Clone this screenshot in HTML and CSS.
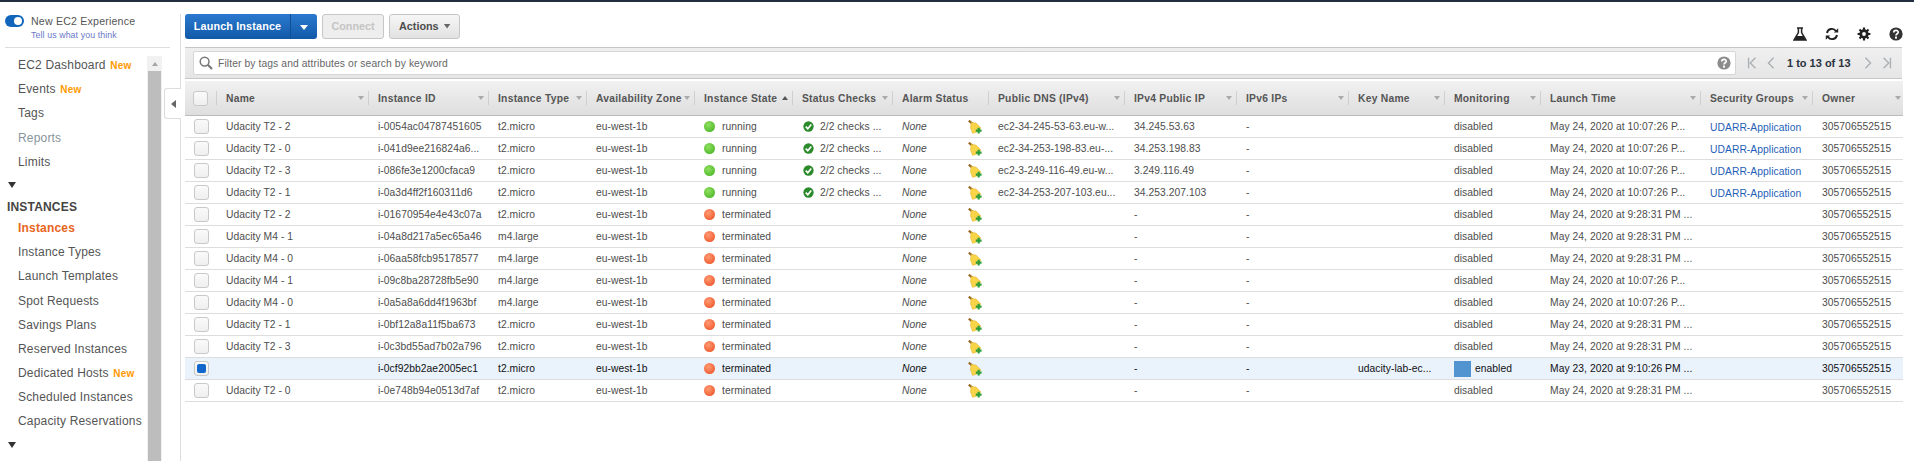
FILE: index.html
```html
<!DOCTYPE html>
<html>
<head>
	<meta charset="utf-8">
	<title>EC2 Instances</title>
	<link rel="stylesheet" href="styles.css">
</head>
<body>
<svg class="sprite" width="0" height="0">
	<defs>
		<symbol id="broom" viewBox="0 0 14 14">
			<path d="M0.8 0.6 L4.6 3.8" stroke="#9a6a24" stroke-width="2.2"/>
			<path d="M3.2 2.4 L8 3 L13 8 L9 12 L4.6 13.4 L2.4 7.6 Z" fill="#f8d448" stroke="#e0ae28" stroke-width=".5"/>
			<path d="M7.8 10.6 H13.6 M10.7 7.8 V13.6" stroke="#2f9e3a" stroke-width="2.2"/>
		</symbol>
		<symbol id="check" viewBox="0 0 12 12">
			<circle cx="6" cy="6" r="5.6" fill="#2b8a2b"/>
			<path d="M3 6.2 L5.2 8.4 L9 3.8" fill="none" stroke="#fff" stroke-width="1.8"/>
		</symbol>
		<symbol id="help" viewBox="0 0 14 14">
			<circle cx="7" cy="7" r="6.6"/>
			<path d="M4.8 5.4 C4.8 2.8 9.2 2.8 9.2 5.2 C9.2 6.8 7 6.8 7 8.6" fill="none" stroke="#fff" stroke-width="1.7"/>
			<rect x="6" y="9.6" width="2" height="2" fill="#fff"/>
		</symbol>
	</defs>
</svg>

<div class="page">
	<aside class="side">
		<div class="exp">
			<span class="toggle"></span>
			<div>
				<div class="exp-title">New EC2 Experience</div>
				<div class="exp-link">Tell us what you think</div>
			</div>
		</div>
		<div class="side-body">
			<nav class="nav">
				<a class="nav-item">EC2 Dashboard <b class="new">New</b></a>
				<a class="nav-item">Events <b class="new">New</b></a>
				<a class="nav-item">Tags</a>
				<a class="nav-item muted">Reports</a>
				<a class="nav-item">Limits</a>
				<div class="nav-arrow"></div>
				<div class="nav-head">INSTANCES</div>
				<a class="nav-item active">Instances</a>
				<a class="nav-item">Instance Types</a>
				<a class="nav-item">Launch Templates</a>
				<a class="nav-item">Spot Requests</a>
				<a class="nav-item">Savings Plans</a>
				<a class="nav-item">Reserved Instances</a>
				<a class="nav-item">Dedicated Hosts <b class="new">New</b></a>
				<a class="nav-item">Scheduled Instances</a>
				<a class="nav-item">Capacity Reservations</a>
				<div class="nav-arrow"></div>
				<div class="nav-head">IMAGES</div>
			</nav>
			<div class="scroll">
				<div class="scroll-up"></div>
				<div class="scroll-thumb"></div>
			</div>
		</div>
		<div class="collapse"><span></span></div>
	</aside>

	<main class="main">
		<div class="toolbar">
			<div class="buttons">
				<div class="btn-launch"><span class="launch-label">Launch Instance</span><span class="launch-drop"></span></div>
				<div class="btn off">Connect</div>
				<div class="btn">Actions <span class="chev"></span></div>
			</div>
			<div class="tools">
				<svg class="tool" viewBox="0 0 14 14"><path d="M4 1 H10 M5.4 1 V5.6 L1 13 H13 L8.6 5.6 V1" fill="none" stroke="#222" stroke-width="1.5"/><path d="M3.6 9 H10.4 L12.6 13 H1.4 Z" fill="#222"/></svg>
				<svg class="tool" viewBox="0 0 14 14"><path d="M2 6 A5 5 0 0 1 11 4 M12 8 A5 5 0 0 1 3 10" fill="none" stroke="#222" stroke-width="1.9"/><path d="M8.8 5.4 H13.2 V1.2 Z M5.2 8.6 H0.8 V12.8 Z" fill="#222"/></svg>
				<svg class="tool" viewBox="0 0 14 14"><circle cx="7" cy="7" r="3.4" fill="none" stroke="#222" stroke-width="2.6"/><path d="M7 .6 V13.4 M.6 7 H13.4 M2.5 2.5 L11.5 11.5 M11.5 2.5 L2.5 11.5" stroke="#222" stroke-width="2.2"/><circle cx="7" cy="7" r="1.9" fill="#fff"/></svg>
				<svg class="tool dark"><use href="#help"/></svg>
			</div>
		</div>

		<div class="filter">
			<div class="search">
				<svg class="lens" viewBox="0 0 14 14"><circle cx="5.6" cy="5.6" r="4.4" fill="none" stroke="#777" stroke-width="1.5"/><path d="M8.8 8.8 L13 13" stroke="#777" stroke-width="2.2"/></svg>
				<span class="placeholder">Filter by tags and attributes or search by keyword</span>
				<svg class="search-help"><use href="#help"/></svg>
			</div>
			<div class="pager">
				<svg class="pg" viewBox="0 0 10 14"><path d="M1 1 V13 M9 1 L3 7 L9 13" fill="none"/></svg>
				<svg class="pg" viewBox="0 0 10 14"><path d="M8 1 L2 7 L8 13" fill="none"/></svg>
				<span class="pg-text">1 to 13 of 13</span>
				<svg class="pg" viewBox="0 0 10 14"><path d="M2 1 L8 7 L2 13" fill="none"/></svg>
				<svg class="pg" viewBox="0 0 10 14"><path d="M9 1 V13 M1 1 L7 7 L1 13" fill="none"/></svg>
			</div>
		</div>

		<table class="grid">
			<colgroup>
				<col class="w32"><col class="w152"><col class="w120"><col class="w98"><col class="w108"><col class="w98"><col class="w100"><col class="w96"><col class="w136"><col class="w112"><col class="w112"><col class="w96"><col class="w96"><col class="w160"><col class="w112"><col class="w90">
			</colgroup>
			<thead>
				<tr>
					<th><div class="th first"><span class="box"></span></div></th>
					<th><div class="th">Name<i class="caret"></i></div></th>
					<th><div class="th">Instance ID<i class="caret"></i></div></th>
					<th><div class="th">Instance Type<i class="caret"></i></div></th>
					<th><div class="th">Availability Zone<i class="caret"></i></div></th>
					<th><div class="th">Instance State<i class="caret up"></i></div></th>
					<th><div class="th">Status Checks<i class="caret"></i></div></th>
					<th><div class="th">Alarm Status</div></th>
					<th><div class="th">Public DNS (IPv4)<i class="caret"></i></div></th>
					<th><div class="th">IPv4 Public IP<i class="caret"></i></div></th>
					<th><div class="th">IPv6 IPs<i class="caret"></i></div></th>
					<th><div class="th">Key Name<i class="caret"></i></div></th>
					<th><div class="th">Monitoring<i class="caret"></i></div></th>
					<th><div class="th">Launch Time<i class="caret"></i></div></th>
					<th><div class="th">Security Groups<i class="caret"></i></div></th>
					<th><div class="th last">Owner<i class="caret"></i></div></th>
				</tr>
			</thead>
			<tbody>
				<tr>
					<td class="cb"><span class="box"></span></td><td>Udacity T2 - 2</td><td>i-0054ac04787451605</td><td>t2.micro</td><td>eu-west-1b</td>
					<td><i class="dot green"></i>running</td><td><svg class="ok"><use href="#check"/></svg>2/2 checks ...</td>
					<td><div class="alarm"><em>None</em><svg class="broom"><use href="#broom"/></svg></div></td>
					<td>ec2-34-245-53-63.eu-w...</td><td>34.245.53.63</td><td>-</td><td></td><td>disabled</td><td>May 24, 2020 at 10:07:26 P...</td><td><a class="link">UDARR-Application</a></td><td>305706552515</td>
				</tr>
				<tr>
					<td class="cb"><span class="box"></span></td><td>Udacity T2 - 0</td><td>i-041d9ee216824a6...</td><td>t2.micro</td><td>eu-west-1b</td>
					<td><i class="dot green"></i>running</td><td><svg class="ok"><use href="#check"/></svg>2/2 checks ...</td>
					<td><div class="alarm"><em>None</em><svg class="broom"><use href="#broom"/></svg></div></td>
					<td>ec2-34-253-198-83.eu-...</td><td>34.253.198.83</td><td>-</td><td></td><td>disabled</td><td>May 24, 2020 at 10:07:26 P...</td><td><a class="link">UDARR-Application</a></td><td>305706552515</td>
				</tr>
				<tr>
					<td class="cb"><span class="box"></span></td><td>Udacity T2 - 3</td><td>i-086fe3e1200cfaca9</td><td>t2.micro</td><td>eu-west-1b</td>
					<td><i class="dot green"></i>running</td><td><svg class="ok"><use href="#check"/></svg>2/2 checks ...</td>
					<td><div class="alarm"><em>None</em><svg class="broom"><use href="#broom"/></svg></div></td>
					<td>ec2-3-249-116-49.eu-w...</td><td>3.249.116.49</td><td>-</td><td></td><td>disabled</td><td>May 24, 2020 at 10:07:26 P...</td><td><a class="link">UDARR-Application</a></td><td>305706552515</td>
				</tr>
				<tr>
					<td class="cb"><span class="box"></span></td><td>Udacity T2 - 1</td><td>i-0a3d4ff2f160311d6</td><td>t2.micro</td><td>eu-west-1b</td>
					<td><i class="dot green"></i>running</td><td><svg class="ok"><use href="#check"/></svg>2/2 checks ...</td>
					<td><div class="alarm"><em>None</em><svg class="broom"><use href="#broom"/></svg></div></td>
					<td>ec2-34-253-207-103.eu...</td><td>34.253.207.103</td><td>-</td><td></td><td>disabled</td><td>May 24, 2020 at 10:07:26 P...</td><td><a class="link">UDARR-Application</a></td><td>305706552515</td>
				</tr>
				<tr>
					<td class="cb"><span class="box"></span></td><td>Udacity T2 - 2</td><td>i-01670954e4e43c07a</td><td>t2.micro</td><td>eu-west-1b</td>
					<td><i class="dot red"></i>terminated</td><td></td>
					<td><div class="alarm"><em>None</em><svg class="broom"><use href="#broom"/></svg></div></td>
					<td></td><td>-</td><td>-</td><td></td><td>disabled</td><td>May 24, 2020 at 9:28:31 PM ...</td><td></td><td>305706552515</td>
				</tr>
				<tr>
					<td class="cb"><span class="box"></span></td><td>Udacity M4 - 1</td><td>i-04a8d217a5ec65a46</td><td>m4.large</td><td>eu-west-1b</td>
					<td><i class="dot red"></i>terminated</td><td></td>
					<td><div class="alarm"><em>None</em><svg class="broom"><use href="#broom"/></svg></div></td>
					<td></td><td>-</td><td>-</td><td></td><td>disabled</td><td>May 24, 2020 at 9:28:31 PM ...</td><td></td><td>305706552515</td>
				</tr>
				<tr>
					<td class="cb"><span class="box"></span></td><td>Udacity M4 - 0</td><td>i-06aa58fcb95178577</td><td>m4.large</td><td>eu-west-1b</td>
					<td><i class="dot red"></i>terminated</td><td></td>
					<td><div class="alarm"><em>None</em><svg class="broom"><use href="#broom"/></svg></div></td>
					<td></td><td>-</td><td>-</td><td></td><td>disabled</td><td>May 24, 2020 at 9:28:31 PM ...</td><td></td><td>305706552515</td>
				</tr>
				<tr>
					<td class="cb"><span class="box"></span></td><td>Udacity M4 - 1</td><td>i-09c8ba28728fb5e90</td><td>m4.large</td><td>eu-west-1b</td>
					<td><i class="dot red"></i>terminated</td><td></td>
					<td><div class="alarm"><em>None</em><svg class="broom"><use href="#broom"/></svg></div></td>
					<td></td><td>-</td><td>-</td><td></td><td>disabled</td><td>May 24, 2020 at 10:07:26 P...</td><td></td><td>305706552515</td>
				</tr>
				<tr>
					<td class="cb"><span class="box"></span></td><td>Udacity M4 - 0</td><td>i-0a5a8a6dd4f1963bf</td><td>m4.large</td><td>eu-west-1b</td>
					<td><i class="dot red"></i>terminated</td><td></td>
					<td><div class="alarm"><em>None</em><svg class="broom"><use href="#broom"/></svg></div></td>
					<td></td><td>-</td><td>-</td><td></td><td>disabled</td><td>May 24, 2020 at 10:07:26 P...</td><td></td><td>305706552515</td>
				</tr>
				<tr>
					<td class="cb"><span class="box"></span></td><td>Udacity T2 - 1</td><td>i-0bf12a8a11f5ba673</td><td>t2.micro</td><td>eu-west-1b</td>
					<td><i class="dot red"></i>terminated</td><td></td>
					<td><div class="alarm"><em>None</em><svg class="broom"><use href="#broom"/></svg></div></td>
					<td></td><td>-</td><td>-</td><td></td><td>disabled</td><td>May 24, 2020 at 9:28:31 PM ...</td><td></td><td>305706552515</td>
				</tr>
				<tr>
					<td class="cb"><span class="box"></span></td><td>Udacity T2 - 3</td><td>i-0c3bd55ad7b02a796</td><td>t2.micro</td><td>eu-west-1b</td>
					<td><i class="dot red"></i>terminated</td><td></td>
					<td><div class="alarm"><em>None</em><svg class="broom"><use href="#broom"/></svg></div></td>
					<td></td><td>-</td><td>-</td><td></td><td>disabled</td><td>May 24, 2020 at 9:28:31 PM ...</td><td></td><td>305706552515</td>
				</tr>
				<tr class="selected">
					<td class="cb"><span class="box on"></span></td><td></td><td>i-0cf92bb2ae2005ec1</td><td>t2.micro</td><td>eu-west-1b</td>
					<td><i class="dot red"></i>terminated</td><td></td>
					<td><div class="alarm"><em>None</em><svg class="broom"><use href="#broom"/></svg></div></td>
					<td></td><td>-</td><td>-</td><td>udacity-lab-ec...</td><td><i class="mon"></i>enabled</td><td>May 23, 2020 at 9:10:26 PM ...</td><td></td><td>305706552515</td>
				</tr>
				<tr>
					<td class="cb"><span class="box"></span></td><td>Udacity T2 - 0</td><td>i-0e748b94e0513d7af</td><td>t2.micro</td><td>eu-west-1b</td>
					<td><i class="dot red"></i>terminated</td><td></td>
					<td><div class="alarm"><em>None</em><svg class="broom"><use href="#broom"/></svg></div></td>
					<td></td><td>-</td><td>-</td><td></td><td>disabled</td><td>May 24, 2020 at 9:28:31 PM ...</td><td></td><td>305706552515</td>
				</tr>
			</tbody>
		</table>
	</main>
</div>
</body>
</html>
```

FILE: styles.css
```css
html, body {
	margin: 0;
	height: 461px;
	overflow: hidden;
	background: #fff;
}
body {
	font-family: "Liberation Sans", Arial, sans-serif;
	font-size: 10.3px;
	color: #4d4d4d;
	border-top: 2px solid #232f3e;
	box-sizing: border-box;
}
.sprite {
	display: block;
	height: 0;
}
.page {
	display: flex;
	height: 459px;
}

/* left nav */
.side {
	position: relative;
	box-sizing: border-box;
	width: 181px;
	flex: none;
	margin-top: 12px;
	border-right: 1px solid #ddd;
	display: flex;
	flex-direction: column;
}
.exp {
	display: flex;
	gap: 7px;
	height: 32px;
	margin: 0 10px 0 5px;
	padding-top: 1px;
	border-bottom: 1px solid #ddd;
}
.toggle {
	position: relative;
	width: 19px;
	height: 12px;
	border-radius: 6px;
	background: #1166bb;
	flex: none;
}
.toggle:after {
	content: "";
	position: absolute;
	right: 2px;
	top: 2px;
	width: 8px;
	height: 8px;
	border-radius: 50%;
	background: #fff;
}
.exp-title {
	font-size: 10.6px;
	line-height: 13px;
	letter-spacing: .2px;
	color: #555;
}
.exp-link {
	font-size: 8.8px;
	line-height: 13px;
	margin-top: 1px;
	letter-spacing: .1px;
	color: #6a78c8;
}
.side-body {
	display: flex;
	flex: 1;
	min-height: 0;
	overflow: hidden;
}
.nav {
	width: 147px;
	flex: none;
	padding-top: 5px;
	font-size: 12px;
	letter-spacing: .18px;
	color: #555;
}
.nav-item {
	display: block;
	height: 24.2px;
	line-height: 24px;
	padding-left: 18px;
	white-space: nowrap;
}
.nav-item.muted {
	color: #87949b;
}
.nav-item.active {
	color: #e8651c;
	font-weight: bold;
}
.new {
	color: #f90;
	font-size: 10px;
	margin-left: 1px;
}
.nav-arrow {
	width: 0;
	height: 0;
	margin: 8px 0 9px 8px;
	border-left: 4px solid transparent;
	border-right: 4px solid transparent;
	border-top: 6px solid #333;
}
.nav-head {
	height: 19px;
	line-height: 20px;
	padding-left: 7px;
	font-weight: bold;
	color: #444;
}
.scroll {
	width: 15px;
	flex: none;
	margin-top: 8px;
	background: #f1f1f1;
	padding: 0 1px;
	box-sizing: border-box;
}
.scroll-up {
	width: 0;
	height: 0;
	margin: 6px auto 5px;
	border-left: 3.5px solid transparent;
	border-right: 3.5px solid transparent;
	border-bottom: 4px solid #a4a4a4;
}
.scroll-thumb {
	height: 400px;
	background: #bdbdbd;
}
.collapse {
	position: absolute;
	left: 164px;
	top: 74px;
	width: 17px;
	height: 31px;
	box-sizing: border-box;
	background: #fff;
	border: 1px solid #ddd;
	border-right: 0;
	border-radius: 3px 0 0 3px;
	display: flex;
	align-items: center;
	justify-content: center;
}
.collapse span {
	border-top: 4px solid transparent;
	border-bottom: 4px solid transparent;
	border-right: 5px solid #666;
}

/* main */
.main {
	flex: none;
	width: 1722px;
	padding: 12px 0 0 4px;
	box-sizing: border-box;
}
.toolbar {
	display: flex;
	justify-content: space-between;
	height: 25px;
	margin-bottom: 8px;
}
.buttons {
	display: flex;
	gap: 5px;
}
.btn-launch {
	display: flex;
	height: 25px;
	width: 132px;
	border-radius: 3px;
	background: linear-gradient(#2a79cf, #1259a8);
	color: #fff;
	font-weight: bold;
	font-size: 10.8px;
	letter-spacing: .15px;
	line-height: 25px;
	box-sizing: border-box;
}
.launch-label {
	width: 105px;
	text-align: center;
	border-right: 1px solid #0f4f96;
}
.launch-drop {
	width: 0;
	height: 0;
	margin: 11px 0 0 9px;
	border-left: 4px solid transparent;
	border-right: 4px solid transparent;
	border-top: 5px solid #fff;
}
.btn {
	height: 25px;
	box-sizing: border-box;
	padding: 0 8px 0 9px;
	border: 1px solid #c6c6c6;
	border-radius: 3px;
	background: linear-gradient(#f6f6f6, #e2e2e2);
	font-weight: bold;
	font-size: 10.8px;
	line-height: 23px;
	color: #4d4d4d;
	display: flex;
	align-items: center;
	gap: 5px;
}
.btn.off {
	color: #c4c4c4;
	padding: 0 8px;
	width: 62px;
	background: #eee;
	justify-content: center;
}
.chev {
	width: 7px;
	height: 5px;
	margin-top: -1px;
	background: #666;
	clip-path: polygon(0 0, 100% 0, 50% 100%);
}
.tools {
	display: flex;
	gap: 18px;
	padding-top: 13px;
}
.tool {
	width: 14px;
	height: 14px;
}
.tool.dark {
	fill: #333;
}

.filter {
	width: 1717px;
	height: 32px;
	box-sizing: border-box;
	padding: 3px 0 3px 8px;
	background: linear-gradient(#efefef, #e6e6e6);
	border-top: 1px solid #c6c6c6;
	border-bottom: 1px solid #c6c6c6;
	display: flex;
}
.search {
	width: 1543px;
	height: 24px;
	box-sizing: border-box;
	background: #fff;
	border: 1px solid #d6d6d6;
	border-radius: 2px;
	display: flex;
	align-items: center;
	padding: 0 4px 0 5px;
}
.lens {
	width: 14px;
	height: 14px;
	margin-right: 5px;
}
.placeholder {
	flex: 1;
	color: #666;
	letter-spacing: .1px;
}
.search-help {
	width: 14px;
	height: 14px;
	fill: #8c8c8c;
}
.pager {
	flex: 1;
	display: flex;
	align-items: center;
	padding-left: 11px;
}
.pg {
	width: 10px;
	height: 12px;
	flex: none;
	stroke: #aab0b4;
	stroke-width: 1.6;
	margin-right: 9px;
}
.pg-text {
	font-weight: bold;
	font-size: 11px;
	color: #2a3340;
	width: 64px;
	flex: none;
	white-space: nowrap;
	margin-left: 2px;
	margin-right: 12px;
}

/* table */
.grid {
	margin-top: 2px;
	width: 1718px;
	table-layout: fixed;
	border-collapse: collapse;
}
.w32 { width: 32px; }
.w90 { width: 90px; }
.w96 { width: 96px; }
.w98 { width: 98px; }
.w100 { width: 100px; }
.w108 { width: 108px; }
.w112 { width: 112px; }
.w120 { width: 120px; }
.w136 { width: 136px; }
.w152 { width: 152px; }
.w160 { width: 160px; }
.grid th {
	height: 34px;
	padding: 0;
	text-align: left;
	font-weight: bold;
	background: linear-gradient(#f1f1f1, #dedede);
	border-bottom: 1px solid #bbb;
}
.th {
	display: flex;
	justify-content: space-between;
	align-items: center;
	height: 14px;
	box-sizing: content-box;
	padding: 0 4px 0 9px;
	border-right: 1px solid #cfcfcf;
	white-space: nowrap;
	letter-spacing: .25px;
	color: #555;
}
.th.first {
	padding-left: 8px;
}
.th.last {
	border-right: 0;
	padding-right: 2px;
}
.caret {
	width: 0;
	height: 0;
	border-left: 3px solid transparent;
	border-right: 3px solid transparent;
	border-top: 4px solid #aaa;
}
.caret.up {
	border-top: 0;
	border-bottom: 4px solid #555;
}
.grid td {
	height: 21px;
	padding: 0 0 0 9px;
	border-bottom: 1px solid #ddd;
	white-space: nowrap;
	overflow: hidden;
	letter-spacing: .05px;
}
.box {
	display: block;
	width: 15px;
	height: 15px;
	box-sizing: border-box;
	border: 1px solid #c9c9c9;
	border-radius: 3px;
	background: linear-gradient(#fafafa, #efefef);
	padding: 2px;
}
.th .box {
	flex: none;
}
.box.on:after {
	content: "";
	display: block;
	width: 9px;
	height: 9px;
	border-radius: 2px;
	background: #1166cc;
}
.selected td {
	background: #eaf2fc;
	color: #111;
}
.dot {
	display: inline-block;
	width: 11px;
	height: 11px;
	border-radius: 50%;
	margin-right: 7px;
	vertical-align: -2px;
}
.dot.green {
	background: radial-gradient(circle at 40% 35%, #8fe05e, #3fae1f);
}
.dot.red {
	background: radial-gradient(circle at 40% 35%, #ff9a72, #ee4a1e);
}
.ok {
	width: 11px;
	height: 11px;
	margin: 0 6px 0 1px;
	vertical-align: -2px;
}
.alarm {
	display: flex;
	justify-content: space-between;
	align-items: center;
	padding-right: 7px;
}
.alarm em {
	font-style: italic;
}
.broom {
	width: 14px;
	height: 14px;
}
.link {
	color: #1f5fb8;
	position: relative;
	top: 1px;
}
.mon {
	display: inline-block;
	width: 17px;
	height: 16px;
	margin-right: 4px;
	background: #5294d0;
	vertical-align: middle;
}
```
